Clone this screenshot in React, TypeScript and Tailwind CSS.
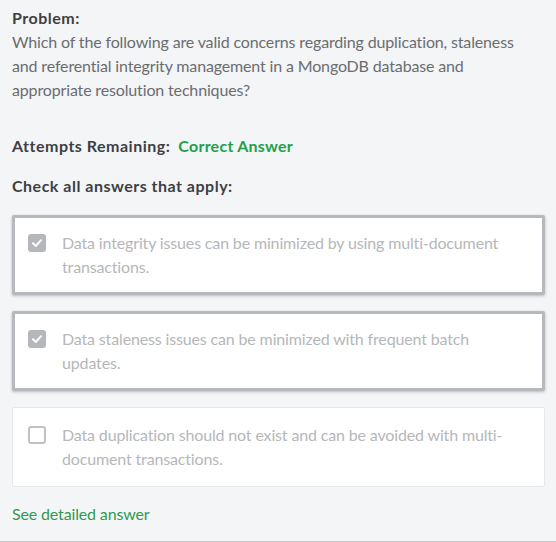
import React from "react";

type Option = {
    text: string;
    checked: boolean;
};

const options: Option[] = [
    {
        text: "Data integrity issues can be minimized by using multi-document transactions.",
        checked: true,
    },
    {
        text: "Data staleness issues can be minimized with frequent batch updates.",
        checked: true,
    },
    {
        text: "Data duplication should not exist and can be avoided with multi-document transactions.",
        checked: false,
    },
];

const CheckBox = ({ checked }: { checked: boolean }) =>
    checked ? (
        <div className="w-[18px] h-[18px] rounded-[3px] bg-[#b4b8bc] flex items-center justify-center shrink-0 mt-[3px]">
            <svg width="12" height="12" viewBox="0 0 12 12" fill="none">
                <path
                    d="M2 6.2L4.8 9L10 3.2"
                    stroke="white"
                    strokeWidth="2"
                    strokeLinecap="round"
                    strokeLinejoin="round"
                />
            </svg>
        </div>
    ) : (
        <div className="w-[18px] h-[18px] rounded-[3px] border-2 border-[#bfc2c5] bg-white shrink-0 mt-[3px]" />
    );

export default function App() {
    return (
        <div
            className="w-[556px] h-[542px] bg-[#f4f5f7] text-[16px] leading-[24px] tracking-[-0.15px] text-[#6a6d70] border-b border-[#c8c8c8]"
            style={{ fontFamily: "Lato, 'Liberation Sans', sans-serif" }}
        >
            <div className="px-3 pt-[6px]">
                <div className="font-bold tracking-[0.5px] text-[#3d4043]">Problem:</div>
                <p className="pr-4">
                    Which of the following are valid concerns regarding
                    duplication, staleness and referential integrity
                    management in a MongoDB database and appropriate
                    resolution techniques?
                </p>

                <div className="mt-[32px] flex gap-2 font-bold tracking-[0.5px]">
                    <span className="text-[#3d4043]">Attempts Remaining:</span>
                    <span className="text-[#22a04b] tracking-[0.25px]">Correct Answer</span>
                </div>

                <div className="mt-[16px] font-bold tracking-[0.5px] text-[#3d4043]">
                    Check all answers that apply:
                </div>

                <div className="mt-[17px] flex flex-col gap-4 w-[533px]">
                    {options.map((o, i) => (
                        <div
                            key={i}
                            className={
                                o.checked
                                    ? "h-[80px] bg-white border-[3px] border-[#b6babe] rounded-[2px] shadow-[0_1px_3px_rgba(0,0,0,0.25)] flex gap-4 px-[13px] py-[13px]"
                                    : "h-[80px] bg-white border border-[#e6e7e9] rounded-[2px] flex gap-4 px-[15px] py-[15px]"
                            }
                        >
                            <CheckBox checked={o.checked} />
                            <span className="text-[#b5b7b9]">{o.text}</span>
                        </div>
                    ))}
                </div>

                <div className="mt-[15px] text-[#2e9a4f]">See detailed answer</div>
            </div>
        </div>
    );
}
